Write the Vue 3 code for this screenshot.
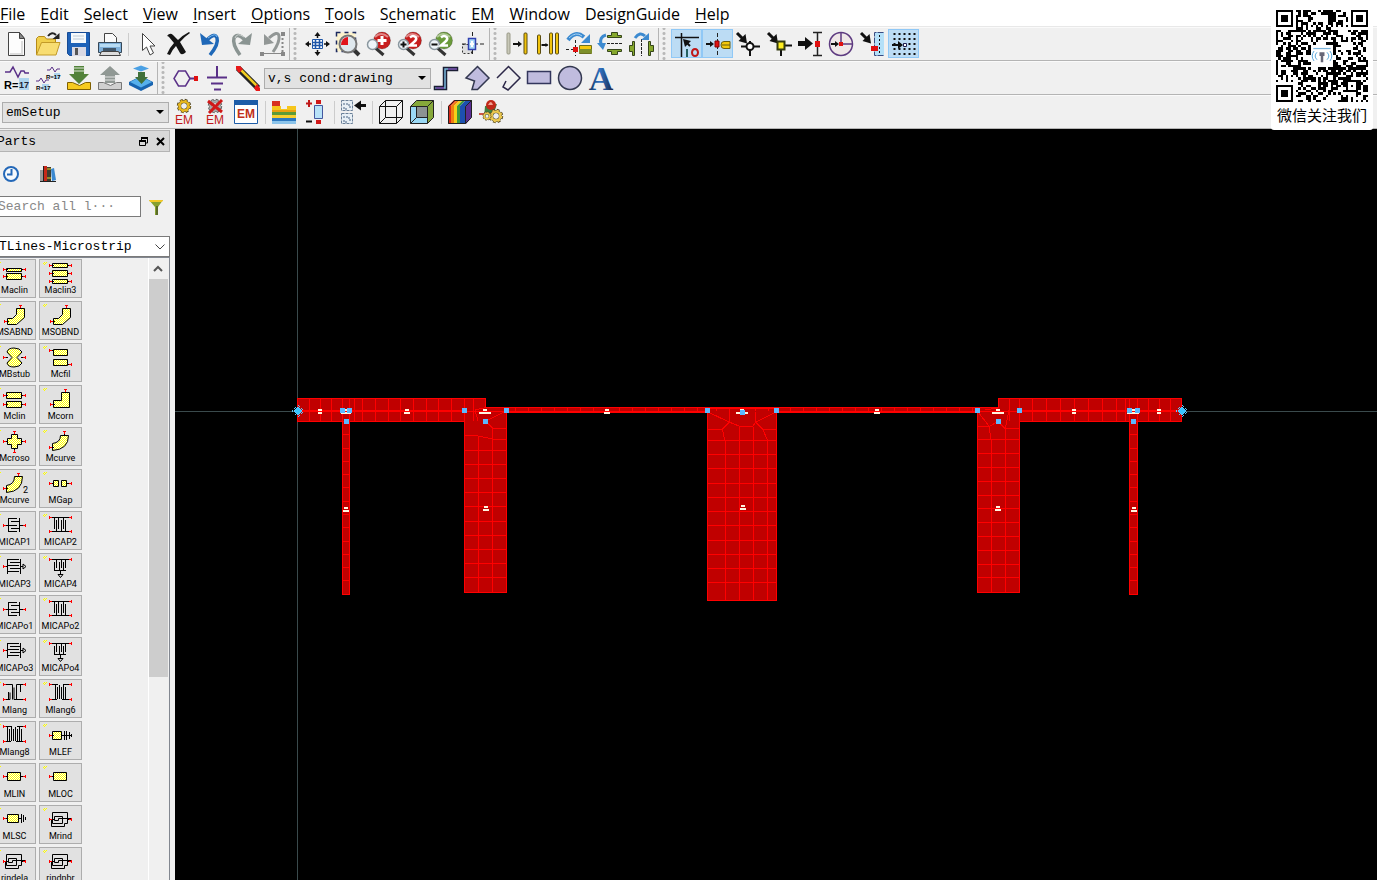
<script setup>
const menus = [
  ['', 'F', 'ile'], ['', 'E', 'dit'], ['', 'S', 'elect'], ['', 'V', 'iew'], ['', 'I', 'nsert'], ['', 'O', 'ptions'],
  ['', 'T', 'ools'], ['S', 'c', 'hematic'], ['', 'EM', ''], ['', 'W', 'indow'], ['DesignGuide', '', ''], ['', 'H', 'elp'],
]

const magnifier = (ball, mark) => `
  <path d="M11.5 19l8 7" stroke="#333" stroke-width="3"/>
  <circle cx="18" cy="11.5" r="8.5" fill="${ball}" stroke="#0003"/><path d="M11 8q6-6 13 0" stroke="#fff7" stroke-width="2" fill="none"/>
  <circle cx="8.500" cy="15.500" r="5" fill="#eef4f8" stroke="#8a979f" stroke-width="1.5"/>${mark}`
const two = '<path d="M15 8.500q3-3 6 0q1 2-2 4.500l-4 3.500h7" fill="none" stroke="#fff" stroke-width="2.500"/>'
const gear = (x, y, c, s = '#4a4020', k = 1) => `<g transform="translate(${x} ${y}) scale(${k})"><circle r="7" fill="none" stroke="${s}" stroke-width="4" stroke-dasharray="3.200 2.300"/><circle r="5.500" fill="none" stroke="${s}" stroke-width="4"/><circle r="5.500" fill="none" stroke="${c}" stroke-width="3"/><circle r="7" fill="none" stroke="${c}" stroke-width="2" stroke-dasharray="2.600 2.900"/><circle r="3" fill="#eee"/></g>`
const bar = (x, y, h, c, s) => `<rect x="${x}" y="${y}" width="3" height="${h}" rx="1" fill="${c}" stroke="${s}"/>`
const arrowR = (x, y, w, k = 3) => `<path d="M${x} ${y}h${w - k}" stroke="#111" stroke-width="2"/><path d="M${x + w - k - 2} ${y - k - 1}l${k + 2} ${k + 1}l${-k - 2} ${k + 1}z" fill="#111"/>`
const arrowD = '<path d="M4 4l7 7" stroke="#111" stroke-width="3"/><path d="M14 14.500L5.500 12l7-7z" fill="#111"/>'
const turn = '<path d="M4 11q7-10 16-3" fill="none" stroke="#3c8ad0" stroke-width="4"/><path d="M26 5v9h-9z" fill="#3c8ad0"/><path d="M5 9q7-7 13-2" fill="none" stroke="#a8d4f4"/>'

const I = {
  doc: '<path d="M7.500 3.500h11l5 6v17h-16z" fill="#fdfdfd" stroke="#444"/><path d="M18.500 3.500v6h5z" fill="#888" stroke="#444"/><path d="M21 12v13h-12" stroke="#ddd" fill="none" stroke-width="2"/>',
  open: '<path d="M4.500 26V9.500l2-2h6l2 2.500h9v6" fill="#f0cf4c" stroke="#b58a18"/><path d="M9.500 13.500h18.500l-4 12.500h-19.500z" fill="#f8dd72" stroke="#c29a28"/><path d="M16 7q4-5 8-1" stroke="#222" stroke-width="2" fill="none"/><path d="M27.500 4v6h-7z" fill="#222"/>',
  save: '<path d="M4.500 3.500h22v23h-20l-2-2z" fill="#1e62b8" stroke="#174b94"/><path d="M8 4h15v10H8z" fill="#f5f9fc"/><path d="M10 7h11M10 10h11" stroke="#bcc9d4"/><path d="M9 18h14v9H9z" fill="#d9d9e4"/><path d="M12 19h3v7h-3z" fill="#555"/>',
  print: '<path d="M10.500 15V4.500h8l4 4V15" fill="#fafafa" stroke="#444"/><path d="M4.500 13.500h23v10h-23z" fill="#7fb0da" stroke="#364858"/><path d="M6 15h20v3H6z" fill="#b8dcf4"/><path d="M9 19h13v3H9z" fill="#41576b"/><path d="M7.500 22.500h17l2 4h-21z" fill="#ddd" stroke="#444"/>',
  cursor: '<path d="M9.500 4.500v17l4-3.500l3.500 8l3.500-2l-3.500-7h5z" fill="#fff" stroke="#444"/>',
  del: '<path d="M3 7q3-4 6-1l5 5q5-5 11-8l1 1q-6 4-10 9l6 10q-4 4-6 1l-4-7q-4 4-6 9l-3-1q3-7 7-11l-5-6q-1-1-2-1z" fill="#151515"/>',
  undo: '<path d="M5 4l2 12l12-1z" fill="#1f68b8"/><path d="M12 11q8-8 10-2q2 6-7 17" fill="none" stroke="#1f68b8" stroke-width="3.500"/><path d="M13 9q8-6 9-1" fill="none" stroke="#7dbcf0"/>',
  redo: '<path d="M26 4l-2 12l-12-1z" fill="#8a9492"/><path d="M19 11q-8-8-11-2q-2 6 6 17" fill="none" stroke="#8a9492" stroke-width="3.500"/><path d="M18 8q-7-5-9 1" fill="none" stroke="#cfd4d2"/>',
  area: '<path d="M7 5v11l10-2z" fill="#929796"/><path d="M12 9q9-8 10-2q1 6-6 16" fill="none" stroke="#929796" stroke-width="3"/><path d="M25.500 5v19" stroke="#888" stroke-width="2" stroke-dasharray="2 2" fill="none"/><path d="M5 24.500h21" stroke="#888"/><path d="M3 23h4v4H3zM24 23h4v4h-4zM24 3h4v4h-4z" fill="#888"/>',
  pan: '<path d="M10.500 10.500h10v9h-10z" fill="#fff" stroke="#1e56a8"/><path d="M13.500 10v10M17.500 10v10M10 13.500h11M10 16.500h11" stroke="#1e56a8" stroke-width="1.500"/><path d="M15.500 3l3 4h-6zM15.500 27l3-4h-6zM3 15l4-3v6zM28 15l-4-3v6z" fill="#111"/><path d="M15.500 5v4M15.500 21v4M5 15h4M22 15h4" stroke="#111" stroke-width="1.500"/>',
  zarea: '<path d="M3.500 3.500h19v19h-19z" fill="#fdf3cc" stroke="#1c2a60" stroke-width="1.500" stroke-dasharray="4 4"/><path d="M20 20l6 6" stroke="#333" stroke-width="4"/><circle cx="15" cy="15" r="8.500" fill="#dfe8ee" stroke="#777" stroke-width="2"/><path d="M15 16h-7a7 8 0 0 1 7-8z" fill="#e0141c"/>',
  zplus: magnifier('#c81e1e', '<path d="M18 7v9M13.500 11.500h9" stroke="#fff" stroke-width="3"/>'),
  zin: magnifier('#c81e1e', two + '<path d="M8.500 12.500v6M5.500 15.500h6" stroke="#111" stroke-width="2"/>'),
  zout: magnifier('#6a9a3a', two + '<path d="M5.500 15.500h6" stroke="#111" stroke-width="2"/>'),
  center: '<path d="M5.500 15.500h9v9h-9z" fill="#ddd" stroke="#333" stroke-dasharray="2 2"/><path d="M15.500 3v24M5 15h22" stroke="#222" stroke-dasharray="4 2"/><path d="M11.500 9.500h7v11h-7z" fill="#a9d8f8" stroke="#3040b0" stroke-width="1.500"/><path d="M15 12v6M13 15h4" stroke="#fff" stroke-width="2"/>',
  al1: bar(5, 4, 21, '#c8c8b8', '#999988') + arrowR(11, 15, 9, 2) + bar(22, 4, 21, '#f2c40c', '#5a4c10'),
  al2: bar(4.5, 6, 19, '#f2c40c', '#5a4c10') + arrowR(8.5, 16, 7, 1) + bar(16.5, 4, 21, '#f2c40c', '#5a4c10') + bar(22.5, 4, 21, '#f2c40c', '#5a4c10'),
  rot: turn + '<path d="M11.500 11v16M2 20.500h12" stroke="#222" stroke-dasharray="3 2"/><path d="M9 18h5v5H9z" fill="#e01010"/><path d="M15.500 16.500h12v8h-12z" fill="#f4c80c" stroke="#6a7020"/><path d="M15 20h13v4H15z" fill="#7d8f2a"/>',
  mirv: '<path d="M12.500 8.500v-2h4v-3h6v3h4v2zM12.500 20.500v2h4v3h6v-3h4v-2z" fill="#86a82c" stroke="#35451a"/><path d="M12 14.500h16" stroke="#222" stroke-dasharray="3 1"/><path d="M11 6q-7 2-5 9" fill="none" stroke="#3c8ad0" stroke-width="3"/><path d="M2 14h9l-3 7z" fill="#3c8ad0"/>',
  mirh: '<path d="M8.500 12.500h-2v4h-3v6h3v4h2zM22.500 12.500h2v4h3v6h-3v4h-2z" fill="#86a82c" stroke="#35451a"/><path d="M15.500 10v17" stroke="#222" stroke-dasharray="3 1"/><path d="M9 9q5-7 10-2" fill="none" stroke="#3c8ad0" stroke-width="3"/><path d="M23 4v7h-8z" fill="#3c8ad0"/>',
  s1: '<path d="M10.500 4v24M4 8.500h24" stroke="#111" stroke-width="1.500"/><path d="M19 17l-4-4" stroke="#111" stroke-width="2"/><path d="M12 10l8 2-6 6z" fill="#111"/><path d="M16 20v8" stroke="#246060" stroke-width="2"/><ellipse cx="24" cy="23.500" rx="3" ry="3.500" fill="none" stroke="#c01818" stroke-width="2"/>',
  s2: arrowR(4, 15, 8, 2) + '<path d="M15.500 4v24" stroke="#222" stroke-dasharray="4 2"/><path d="M13 12h4v6h-4z" fill="#e01010" stroke="#800"/><path d="M28 12.500h-6q-3 0-3 3.500t3 3.500h6z" fill="#f4c80c" stroke="#6a6010"/><path d="M20 16h8" stroke="#6a6010"/>',
  s3: arrowD + '<path d="M17 12v15M8 17.500h19" stroke="#111" stroke-width="2"/><circle cx="17" cy="17.500" r="3.500" fill="#fff" stroke="#111" stroke-width="2"/>',
  s4: arrowD + '<path d="M17 17v10M17 16.500h11" stroke="#111" stroke-width="2"/><path d="M13.500 12.500h7v8h-7z" fill="#ffee20" stroke="#333a10" stroke-width="2"/>',
  s5: '<path d="M3 14.500h8" stroke="#111" stroke-width="5"/><path d="M10 8l8 6.500-8 6.500z" fill="#111"/><path d="M22.500 4v22M18 3.500h9M18 26.500h9" stroke="#222" stroke-width="1.500"/><path d="M20 12h5v6h-5z" fill="#e01010"/>',
  s6: '<circle cx="15" cy="15" r="11.500" fill="#efe8e8" stroke="#5d3a80" stroke-width="1.500"/><path d="M15 3v12h12" stroke="#5d3a80" fill="none" stroke-width="1.500"/>' + arrowR(5, 15, 8, 2) + '<path d="M13 13h4v4h-4z" fill="#e01010"/>',
  s7: '<path d="M18 3h9v24h-9z" fill="#b4e0f8"/><path d="M26.500 3.500h-9v23h9" fill="none" stroke="#3a4a80" stroke-dasharray="6 1"/><path d="M22.500 6v18" stroke="#111" stroke-dasharray="2 2"/>' + arrowD + '<path d="M14 17h7v5h-7z" fill="#e01010"/>',
  s8: [6, 11, 16, 21, 26].map(x => `<path d="M${x + 0.5} 4v24" stroke="#111" stroke-width="2" stroke-dasharray="2 3"/>`).join('') + arrowR(4, 16, 11, 3) + '<path d="M15.500 14.500h3v3h-3z" fill="#fff" stroke="#225"/>',

  r17: '<path d="M4 9h5l3-5 5 10 3-6h3l1 2h4" fill="none" stroke="#5a3088" stroke-width="1.500"/><path d="M18 15h10v12H18z" fill="#aed4ee"/><text x="3" y="26" font-size="11" font-weight="bold">R=</text><text x="18" y="25" font-size="9" font-weight="bold" fill="#223">17</text>',
  r17b: '<path d="M15 7h3l2-3 3 5 2-3h3M4 18h3l2-3 3 5 2-3h3" fill="none" stroke="#5a3088"/><path d="M22 10h6v6h-6zM10 21h7v6h-7z" fill="#aed4ee"/><text x="14" y="16" font-size="6" font-weight="bold">R=17</text><text x="4" y="27" font-size="6" font-weight="bold">R=17</text>',
  push: '<path d="M4.500 19.500h5l7 3 6-3h5v7h-23z" fill="#f6ca20" stroke="#806000"/><path d="M11 3h10v8h5l-10 10L6 11h5z" fill="#52823a"/><path d="M10 5h12M10 8h12" stroke="#dfe8da"/>',
  pop: '<path d="M4.500 19.500h5l7 3 6-3h5v7h-23z" fill="#d0d0d0" stroke="#777"/><path d="M11 20h10v-8h5L16 3 6 12h5z" fill="#909894"/><path d="M10 14h12M10 17h12" stroke="#e4e4e4"/>',
  chip: '<path d="M4 19l12-6 12 6v3l-12 6-12-6z" fill="#1864b0"/><path d="M5 19l11-5.500L27 19l-11 5.500z" fill="#56b0ec"/><path d="M8 5.500l8-3 8 3-8 3z" fill="#4aa0e4"/><path d="M13 9h7v5h3l-6.500 7L10 14h3z" fill="#40703a"/>',
  port: '<path d="M8.500 8h7l4.500 7.500-4.500 7.500h-7L4 15.500z" fill="none" stroke="#5a3088" stroke-width="1.500"/><path d="M20 15.500h5" stroke="#5a3088" stroke-width="2"/><path d="M24 13h4v5h-4z" fill="#e01010"/>',
  gnd: '<path d="M16 3v11M6 14.500h20M10 20.500h12M13 26.500h7" stroke="#5a3088" stroke-width="2"/>',
  pencil: '<path d="M6 5l20 20" stroke="#222" stroke-width="6"/><path d="M8 6l17 17" stroke="#f0cc20" stroke-width="2.500"/><path d="M4 3h4l3 3-4 4-3-4zM22 25l3-4 3 4v3h-4z" fill="#e81818"/>',
  step: '<path d="M3.500 23.500h9v-19h14v3h-11v19h-12z" fill="#7ab8dc" stroke="#1b1e34" stroke-width="1.500"/><path d="M5 25h8M17 6h9" stroke="#6a3490" stroke-width="1.500"/>',
  poly: '<path d="M15.500 3.500L27 15 15.500 26.500H10L12.500 18 4 15z" fill="#c0bcde" stroke="#333850" stroke-width="1.500"/>',
  pline: '<path d="M4 15L15.500 3.500 27 15 15 27l-5-3 3-6" fill="none" stroke="#2c2848" stroke-width="1.500"/>',
  rect: '<path d="M3.500 8.500h23v12h-23z" fill="#c0bcde" stroke="#33365c" stroke-width="1.500"/>',
  circ: '<circle cx="15" cy="15" r="11.500" fill="#c0bcde" stroke="#333850" stroke-width="1.500"/>',
  text: '<defs><linearGradient id="ag"><stop offset="0" stop-color="#16335e"/><stop offset=".45" stop-color="#2f74c4"/><stop offset="1" stop-color="#1c2140"/></linearGradient></defs><text x="15" y="27" font-size="34" text-anchor="middle" font-weight="bold" font-family="Liberation Serif, serif" fill="url(#ag)">A</text>',

  em1: gear(15, 9, '#e8b820', '#4a4020', 0.8) + '<text x="15" y="27" font-size="12" text-anchor="middle" fill="#c01818">EM</text>',
  em2: gear(15, 9, '#aaa', '#555', 0.8) + '<path d="M8 4l14 11M22 3L9 16" stroke="#d01818" stroke-width="3"/><text x="15" y="27" font-size="12" text-anchor="middle" fill="#c01818">EM</text>',
  em3: '<path d="M3.500 3.500h23v23h-23z" fill="#fff" stroke="#1c5ca8"/><path d="M3 3h24v5H3z" fill="#1c5ca8"/><text x="15" y="21" font-size="12" font-weight="bold" text-anchor="middle" fill="#c03018">EM</text>',
  layers: '<path d="M3 4h8v5H3z" fill="#d83020"/><path d="M3 9h9v3h6V9h9v6H3z" fill="#f6c61c"/><path d="M3 13h24v2H3z" fill="#e8a010"/><path d="M3 15h24v3H3z" fill="#5c9a38"/><path d="M3 18h24v3H3z" fill="#f6cf30"/><path d="M3 21h24v3H3z" fill="#2c78c0"/><path d="M3 24h24v3H3z" fill="#8cc4ea"/>',
  comp: '<path d="M6 6.500h6M9 3v7" stroke="#c01818" stroke-width="2"/><path d="M6 24.500h6" stroke="#111" stroke-width="2"/><path d="M16 3h5v4h-5zM16 23h5v4h-5z" fill="#d01818"/><path d="M14.500 8.500h8v13h-8z" fill="#b8e2f8" stroke="#4458a0"/>',
  chips: '<path d="M3.500 3.500h11v10h-11zM3.500 16.500h11v10h-11z" fill="#e8f0f6" stroke="#6a8098" stroke-dasharray="3 1"/><path d="M5 7h6v3h3M5 20h6v3h3M6 10v2h4M6 23v2h4" stroke="#4a6484" fill="none" stroke-dasharray="2 1"/><path d="M28 8.500h-7" stroke="#111" stroke-width="3"/><path d="M16 8.500l7-5v10z" fill="#111"/>',
  cube: '<path d="M3.500 9.500h17v17h-17zM9.500 3.500h17v17h-17zM3.500 9.500l6-6M20.500 9.500l6-6M3.500 26.500l6-6M20.500 26.500l6-6" fill="none" stroke="#111"/>',
  cube2: '<path d="M3.500 9.500l6-6h17v17l-6 6h-17z" fill="#9ad8f4"/><path d="M3.500 9.500l6-6h17v17l-6 6v-17z" fill="#86a83a"/><path d="M9.500 9.500h11v11h-11z" fill="#8c9292"/><path d="M3.500 9.500h17v17h-17zM3.500 9.500l6-6h17v17l-6 6M20.500 9.500l6-6M9.500 10v10.500l-6 6M9.500 20.500h11" fill="none" stroke="#222"/>',
  rain: '<path d="M3 9l6-6h3L6 9v18H3z" fill="#d82818"/><path d="M6 9l6-6h3L9 9v18H6z" fill="#f08010"/><path d="M9 9l6-6h3l-6 6v18H9z" fill="#f4d018"/><path d="M12 9l6-6h3l-6 6v18h-3z" fill="#3c9a3c"/><path d="M15 9l6-6h6l-6 6v18h-6z" fill="#1c50b0"/><path d="M21 9l6-6v17l-6 7z" fill="#5a2e94"/><path d="M3.500 9.500l6-6h17v17l-6 6h-17zM20.500 9.500v17M20.500 9.500l6-6" fill="none" stroke="#222"/>',
  opt: '<path d="M3 17h9" stroke="#c02010" stroke-width="1.500"/><path d="M9 9l12-2-4 12-9 1z" fill="#3f8040"/><circle cx="15" cy="8" r="5" fill="#c02818"/><path d="M12 8q3-6 5 0" fill="#f0a090"/>' + gear(20, 19, '#ecc850', '#4a4020', 0.8) + gear(11, 19, '#ecc850', '#4a4020', 0.5),
}

const row1 = [
  [['doc', 'New'], ['open', 'Open'], ['save', 'Save'], ['print', 'Print'], null, ['cursor', 'Select mode'], ['del', 'Delete'], ['undo', 'Undo'], ['redo', 'Redo'], ['area', 'Undo selection']],
  [['pan', 'View all'], ['zarea', 'Zoom area'], ['zplus', 'Zoom in'], ['zin', 'Zoom in by 2'], ['zout', 'Zoom out by 2'], ['center', 'Center']],
  [['al1', 'Move edge'], ['al2', 'Copy edge'], ['rot', 'Rotate'], ['mirv', 'Mirror about X'], ['mirh', 'Mirror about Y']],
  [['s1', 'Snap origin', 1], ['s2', 'Snap to pin', 1], ['s3', 'Snap vertex'], ['s4', 'Snap midpoint'], ['s5', 'Snap edge'], ['s6', 'Snap center'], ['s7', 'Snap intersection'], ['s8', 'Snap grid', 1]],
]
const row2 = [['r17', 'Variables'], ['r17b', 'All variables'], ['push', 'Push'], ['pop', 'Pop'], ['chip', 'Substrate']]
const row2b = [['port', 'Pin'], ['gnd', 'Ground'], ['pencil', 'Trace']]
const row2c = [['step', 'Path'], ['poly', 'Polygon'], ['pline', 'Polyline'], ['rect', 'Rectangle'], ['circ', 'Circle'], ['text', 'Text']]
const row3 = [['em1', 'EM setup'], ['em2', 'Stop EM'], ['em3', 'EM results'], null, ['layers', 'Substrate editor'], ['comp', 'Components'], null, ['chips', 'Ports'], null, ['cube', 'Wireframe'], ['cube2', '3D view'], null, ['rain', 'Field view'], ['opt', 'Optimize']]

// Part symbols: y = filled bodies, k = lines, t = red terminals (side, x, y)
const rc = (x, y, w, h) => `M${x}.5 ${y}.5h${w}v${h}h-${w}z`
const vs = (xs, a, b) => xs.map((x, i) => `M${x}.5 ${(i % 2 ? b : a)[0]}v${(i % 2 ? b : a)[1]}`).join('')
const lr = (...ys) => ys.flatMap(y => [['l', 10, y], ['r', 33, y]])
const cap1 = { k: 'M15.500 7v14M26.500 7v14M15 7.500h9M18 10.500h9M15 14.500h9M18 17.500h9M15 20.500h9M11 14.500h5M26 14.500h6', t: lr(14) }
const cap2 = { k: 'M10 6.500h23M10 20.500h23' + vs([15, 17, 19, 22, 24, 26], [6, 12], [9, 12]), t: lr(6, 20) }
const cap3 = { k: 'M14.500 6v15M27.500 6v15M14 6.500h12M17 9.500h11M14 12.500h12M17 15.500h11M14 18.500h12M11 13.500h4M28 13.500h2M30 11l3 2.500-3 2.500z', t: [['l', 10, 13]] }
const cap4 = { k: 'M10 6.500h23M15 17.500h12M21.500 17v5M19 21.500h5l-2.500 3z' + vs([15, 17, 20, 22, 24, 26], [9, 9], [6, 9]), t: lr(6) }
const bend = { y: 'M23.500 7.500h8v9l-8 7h-9v-6h5l4-4z', t: [['t', 27, 4], ['l', 11, 20]] }
const spiral = { k: 'M10 14.500h2.500v7h13v-3h3v-11h-15v11h10v-7h-8v4h4v-2h13', t: lr(14) }
const parts = [
  ['Maclin', { y: rc(13, 9, 15, 3) + rc(13, 14, 15, 6), t: lr(10, 17) }],
  ['Maclin3', { y: rc(13, 4, 15, 4) + rc(13, 11, 15, 6) + rc(13, 20, 15, 4), t: lr(6, 14, 22) }],
  ['MSABND', bend], ['MSOBND', bend],
  ['MBstub', { y: 'M14 9q1-4 7-4t8 4l-5 5.500 5 5.500q-2 4-8 4t-7-4l5-5.500z', t: lr(14) }],
  ['Mcfil', { y: rc(14, 6, 14, 6) + rc(14, 16, 14, 6), t: [['l', 10, 7], ['r', 33, 21]] }],
  ['Mclin', { y: rc(13, 7, 15, 6) + rc(13, 16, 15, 6), t: lr(10, 19) }],
  ['Mcorn', { y: 'M22.500 7.500h8v15h-16v-7h8z', t: [['t', 26, 4], ['l', 11, 19]] }],
  ['Mcroso', { y: 'M18.500 7.500h6v4h4v6h-4v4h-6v-4h-4v-6h4z', t: [...lr(14), ['t', 21, 4], ['b', 21, 25]] }],
  ['Mcurve', { y: 'M21.500 8.500h8q0 14-16 15v-7q8-1 8-8z', t: [['t', 25, 4], ['l', 10, 20]] }],
  ['Mcurve', { y: 'M21.500 7.500h8q0 15-16 16v-7q8-1 8-9z', n: 1, t: [['t', 25, 4], ['l', 10, 19]] }],
  ['MGap', { y: rc(14, 11, 5, 6) + rc(22, 11, 5, 6), t: lr(14) }],
  ['MICAP1', cap1], ['MICAP2', cap2], ['MICAP3', cap3], ['MICAP4', cap4],
  ['MICAPo1', cap1], ['MICAPo2', cap2], ['MICAPo3', cap3], ['MICAPo4', cap4],
  ['Mlang', { k: 'M10 5.500h9.500v15M10 20.500h7v-7M23.500 20.500v-15h9M33 20.500h-12v-12M27.500 5v8M15.500 13v7', t: lr(5, 20) }],
  ['Mlang6', { k: 'M10 5.500h9M24 5.500h9M10 20.500h8M23 20.500h10' + vs([16, 18, 20, 22, 24, 26], [6, 14], [8, 12]), t: lr(5, 20) }],
  ['Mlang8', { k: 'M10 5.500h9M24 5.500h9M10 20.500h8M23 20.500h10' + vs([14, 16, 18, 20, 22, 24, 26, 28], [6, 14], [8, 12]), t: lr(5, 20) }],
  ['MLEF', { y: rc(13, 10, 9, 8), k: 'M22 14.500h10M25.500 10v9M27.500 10v9M30.500 11v7M32.500 13v3', t: [['l', 10, 14]] }],
  ['MLIN', { y: rc(14, 9, 13, 8), t: lr(13) }],
  ['MLOC', { y: rc(14, 9, 13, 8), t: [['l', 10, 13]] }],
  ['MLSC', { y: rc(14, 9, 11, 8), k: 'M25 13.500h3M28.500 9v9M30.500 10v7M32.500 12v3', t: [['l', 10, 13]] }],
  ['Mrind', spiral], ['rindela', spiral], ['rindnbr', spiral],
]
const term = ([d, x, y]) => ({
  l: `M${x}.5 ${y - 1}v3M${x} ${y}.5h3`, r: `M${x - 1}.5 ${y - 1}v3M${x - 3} ${y}.5h3`,
  t: `M${x - 1} ${y}.5h3M${x}.5 ${y}v3`, b: `M${x - 1} ${y}.5h3M${x}.5 ${y - 2}v3`,
})[d]
const lead = ([d, x, y]) => ({ l: `M${x + 3} ${y}.5h2`, r: `M${x - 5} ${y}.5h2`, t: `M${x}.5 ${y + 2}v2`, b: `M${x}.5 ${y - 4}v2` })[d]

// Layout mesh
const vl = (xs, a, b) => xs.map(x => `M${x}.5 ${a}V${b}`).join('')
const hl = (ys, a, b) => ys.map(y => `M${a} ${y}.5H${b}`).join('')
const thin = (a, b) => { let s = ''; for (let x = a; x < b; x += 13) s += `M${x}.5 408V411`; return s }
const stubRows = [434, 448, 461, 474, 487, 501, 514, 527, 541, 554, 567, 580]
const mesh = [
  vl([309, 320, 331, 342, 349, 354, 362, 375, 388, 400, 413, 426, 438, 451, 464, 473], 399, 421),
  hl(stubRows, 343, 349), hl(stubRows, 1130, 1137),
  vl([478], 436, 592), vl([492], 428, 592),
  hl([450, 464, 478, 492, 506, 521, 535, 549, 563, 577], 465, 506),
  hl([435], 465, 478), hl([428, 439], 492, 506), 'M478.500 436l14 3M485.500 421l7 7M485.500 421l21-10M475 410l3 11M475 410l13-3',
  thin(515, 706), thin(790, 976), thin(716, 770),
  vl([725, 767], 440, 600), vl([739, 753], 427, 600),
  hl([440, 454, 468, 483, 497, 511, 525, 540, 554, 568, 582], 708, 776),
  'M708 412l21 10 10 4h14l3-4 20-10M729.500 409v13l-7 7 2 11M755.500 412v10l7 7 5 11M708 429.500h15M762 429.500h14',
  vl([991], 440, 592), vl([1005], 428, 592),
  hl([439, 453, 467, 481, 495, 508, 522, 536, 550, 564, 577], 978, 1019),
  'M978 412l11 14 2 14M978 426.500h11l9-5 7 7h14M1009.500 408l-4 20M985 410l13-2',
  vl([1009, 1019, 1032, 1046, 1060, 1074, 1088, 1102, 1116, 1125, 1129, 1137, 1148, 1159, 1170], 399, 421),
].join('')
const pins = [[342, 410], [349, 410], [346, 421], [464, 410], [506, 410], [485, 421], [707, 410], [776, 410], [742, 412], [977, 410], [1019, 410], [998, 421], [1129, 410], [1137, 410], [1133, 421]]
const tags = [[320, 411, 4], [346, 411, 10], [407, 411, 6], [485, 411, 12], [607, 411, 6], [742, 411, 12], [877, 411, 6], [998, 411, 12], [1074, 411, 4], [1133, 411, 12], [1159, 411, 4], [346, 509, 6], [486, 508, 6], [743, 507, 6], [998, 508, 6], [1134, 509, 6]]

// Code symbol modules on a 37-cell grid
const N = 37
let seed = 20177
const rnd = () => (seed = (seed * 1103515245 + 12345) % 2147483648) / 2147483648
const ring = (x, y, cx, cy, r) => {
  const d = Math.max(Math.abs(x - cx), Math.abs(y - cy))
  return d > r ? null : r === 4 ? d !== 4 && d !== 2 : d !== 1
}
let qr = ''
for (let y = 0; y < N; y++) for (let x = 0; x < N; x++) {
  let on = rnd() < 0.5
  if (y === 6 || x === 6) on = (x + y) % 2 === 0
  for (const [cx, cy, r] of [[3, 3, 4], [33, 3, 4], [3, 33, 4], [30, 30, 2]]) {
    const v = ring(x, y, cx, cy, r)
    if (v !== null) on = v
  }
  if (on) qr += `M${x} ${y}h1v1h-1z`
}
</script>

<template>
  <div class="app">
    <nav class="menu">
      <a v-for="m in menus" :key="m.join('')" href="#">{{ m[0] }}<u>{{ m[1] }}</u>{{ m[2] }}</a>
    </nav>

    <div class="bar wide">
      <template v-for="(g, i) in row1" :key="i">
        <span v-if="i" class="grip"></span>
        <template v-for="(b, j) in g" :key="j">
          <button v-if="b" class="tool" :class="{ on: b[2] }" :aria-label="b[1]"><svg viewBox="0 0 31 29" v-html="I[b[0]]"></svg></button>
          <i v-else class="sep"></i>
        </template>
      </template>
    </div>
    <div class="bar">
      <button v-for="b in row2" :key="b[0]" class="tool" :aria-label="b[1]"><svg viewBox="0 0 31 29" v-html="I[b[0]]"></svg></button>
      <span class="grip"></span>
      <button v-for="b in row2b" :key="b[0]" class="tool" :aria-label="b[1]"><svg viewBox="0 0 31 29" v-html="I[b[0]]"></svg></button>
      <span class="combo"><select aria-label="Layer"><option>v,s cond:drawing</option></select></span>
      <button v-for="b in row2c" :key="b[0]" class="tool" :aria-label="b[1]"><svg viewBox="0 0 31 29" v-html="I[b[0]]"></svg></button>
    </div>
    <div class="bar">
      <span class="combo"><select aria-label="EM setup"><option>emSetup</option></select></span>
      <template v-for="(b, j) in row3" :key="j">
        <button v-if="b" class="tool" :aria-label="b[1]"><svg viewBox="0 0 31 29" v-html="I[b[0]]"></svg></button>
        <i v-else class="sep"></i>
      </template>
    </div>

    <div class="work">
      <aside class="panel">
        <header class="title">
          <h2>Parts</h2>
          <button aria-label="Float"><svg width="9" height="9"><path d="M2.500 3V1h6v5h-2M.500 3.500h6v5h-6z" fill="none" stroke="#000" /><path d="M0 4h7M2 1h7" stroke="#000" stroke-width="2" /></svg></button>
          <button aria-label="Close"><svg width="9" height="9"><path d="M1 1l7 7M8 1L1 8" stroke="#000" stroke-width="2" /></svg></button>
        </header>
        <div class="modes">
          <button aria-label="Recent"><svg width="18" height="18"><circle cx="9" cy="9" r="7" fill="#f6f9fc" stroke="#2468b8" stroke-width="2" /><path d="M9.500 4v5.500H5" fill="none" stroke="#2468b8" stroke-width="2" /></svg></button>
          <button aria-label="Libraries"><svg width="18" height="18"><path d="M1 5h3v11H1z" fill="#999" /><path d="M5 1h3v15H5z" fill="#c82818" /><path d="M8 2h4v14H8z" fill="#3c3c30" /><path d="M8 4h4M8 13h4" stroke="#e8d020" /><path d="M12 4l3-1 2 12-4 1z" fill="#3a88d0" /><path d="M4.500 1v15M1 16.500h16" stroke="#222" /></svg></button>
        </div>
        <div class="find">
          <input type="text" placeholder="Search all l···" aria-label="Search parts" />
          <button aria-label="Filter"><svg width="16" height="18"><path d="M1 2h14l-5 7v8H7V9z" fill="#86a030" /><path d="M1 2h14l-1 2H2z" fill="#f2c828" /><path d="M9 8v9" stroke="#5a6c28" stroke-width="2" /></svg></button>
        </div>
        <span class="library">
          <select aria-label="Library"><option>TLines-Microstrip</option></select>
          <svg width="10" height="6"><path d="M.500 .500L5 5l4.500-4.500" fill="none" stroke="#444" /></svg>
        </span>
        <div class="list">
          <div class="grid">
            <button v-for="(p, i) in parts" :key="i" class="part">
              <svg viewBox="1 1 41 25">
                <defs><pattern :id="'dots' + i" width="2" height="2" patternUnits="userSpaceOnUse"><path d="M0 0h2v2H0z" fill="#fffff0" /><path d="M0 0h1v1H0zM1 1h1v1H1z" fill="#ff0" /></pattern></defs>
                <path d="M5 3h1v1H5zM7 3h1v1H7zM4 4h1v1H4zM6 4h1v1H6zM5 5h1v1H5z" fill="#ff0" />
                <path v-if="p[1].y" :d="p[1].y" :fill="`url(#dots${i})`" stroke="#000" />
                <path v-if="p[1].k" :d="p[1].k" fill="none" stroke="#000" />
                <path :d="p[1].t.map(lead).join('')" stroke="#000" />
                <path :d="p[1].t.map(term).join('')" stroke="#f00" />
                <text v-if="p[1].n" x="30" y="24" font-size="9">2</text>
              </svg>
              <span>{{ p[0] }}</span>
            </button>
          </div>
          <div class="scroll">
            <svg width="18" height="21"><path d="M5 13l4-4 4 4" fill="none" stroke="#555" stroke-width="2" /></svg>
            <i></i>
          </div>
        </div>
      </aside>

      <main class="canvas">
        <svg width="100%" height="100%" shape-rendering="crispEdges">
          <g transform="translate(-175 -129)">
            <path d="M297.500 0V5000M0 411.500H5000" stroke="#3a4a4c" />
            <g fill="#c00000" stroke="#f00">
              <path d="M297.500 398.500h188v9h492h21v-9h183v23h-162v171h-42v-180h-201v188h-69v-188h-201v180h-42v-171h-167z" />
              <path d="M342.500 421.500h7v173h-7zM1129.500 421.500h8v173h-8z" />
              <path :d="mesh" fill="none" />
              <path d="M298 411H464M506 412H708M776 412H978M1019 411H1181" stroke-width="2" />
              <path d="M464 411.500H506M708 408.500H776M978 411.500H1019M464.500 410V421" />
            </g>
            <g v-for="(t, i) in tags" :key="i" fill="#fff4e0">
              <rect :x="t[0] - 2" :y="t[1] - 2" width="4" height="2" />
              <rect :x="t[0] - t[2] / 2" :y="t[1] + 1" :width="t[2]" height="2" />
            </g>
            <rect v-for="(p, i) in pins" :key="i" :x="p[0] - 2" :y="p[1] - 2" width="5" height="5" fill="#5cb8ff" />
            <g v-for="x in [298, 1182]" :key="x" fill="#38c4ff" stroke="#5cc8ff">
              <path :d="`M${x} 405l6 6-6 6-6-6z`" fill="none" stroke-dasharray="1 1" />
              <path :d="`M${x} 407l4 4-4 4-4-4z`" />
            </g>
          </g>
        </svg>
      </main>
    </div>

    <figure class="code">
      <svg viewBox="0 0 37 37" shape-rendering="crispEdges">
        <path :d="qr" />
        <rect x="14" y="14" width="9" height="9" rx="1" fill="#fff" />
        <g shape-rendering="auto">
          <path d="M15 15.500h7" stroke="#7ab4dc" stroke-width=".5" />
          <path d="M17.500 17h2v1.500h-2zM18 18.500h1v2.500h-1z" fill="#667" />
          <path d="M16.500 17q-1.500 1.500 0 3M15.300 16.500q-1.500 2 0 4M20.500 17q1.500 1.500 0 3M21.700 16.500q1.500 2 0 4" fill="none" stroke="#5aa8dc" stroke-width=".4" />
        </g>
      </svg>
      <figcaption>微信关注我们</figcaption>
    </figure>
  </div>
</template>

<style>
body { margin: 0; overflow: hidden; }
</style>

<style scoped>
.app {
  position: relative;
  display: flex;
  flex-direction: column;
  height: 100vh;
  overflow: hidden;
  background: #f0f0f0;
  color: #000;
  font-family: "Liberation Mono", monospace;
  font-size: 13px;
}
button {
  padding: 0;
  border: 0;
  background: none;
  font: inherit;
  color: inherit;
}
svg { display: block; flex: none; }
select, input {
  font: inherit;
  color: inherit;
  appearance: none;
  border: 0;
  border-radius: 0;
  outline: 0;
  background: none;
}
.menu {
  display: flex;
  flex: none;
  gap: 15px;
  height: 26px;
  background: #fff;
  border-bottom: 1px solid #e8e8e8;
  font: 16px/29px "Open Sans", "Noto Sans", sans-serif;
  white-space: nowrap;
}
.menu a { color: #000; text-decoration: none; }
.menu u { text-underline-offset: 2px; }
.bar {
  display: flex;
  flex: none;
  align-items: center;
  height: 32px;
  padding: 0 1px;
  border-top: 1px solid #fafafa;
  border-bottom: 1px solid #b4b4b4;
  font-family: "Liberation Sans", sans-serif;
}
.tool { flex: none; align-self: flex-start; width: 31px; height: 29px; margin-top: 1px; }
.tool.on { background: #bcdcf4; box-shadow: inset 0 0 0 1px #90c8f6; }
.tool svg { width: 31px; height: 29px; }
.sep {
  flex: none;
  width: 1px;
  height: 23px;
  margin: 0 3px;
  background: #ccc;
}
.wide .sep { margin-right: 4px; }
.grip {
  flex: none;
  align-self: stretch;
  width: 12px;
  margin-left: 1px;
  border-left: 1px solid #b4b4b4;
  background: radial-gradient(circle, #b8b8b8 1px, transparent 2px) 3px 3px / 4px 5px repeat-y;
}
.combo {
  position: relative;
  flex: none;
  display: flex;
  width: 167px;
  margin: 0 0 0 1px;
  font-family: "Liberation Mono", monospace;
}
.combo select {
  width: 100%;
  height: 21px;
  padding: 0 3px;
  background: #e2e2e2;
  border: 1px solid #adadad;
}
.combo::after {
  content: "";
  position: absolute;
  right: 5px;
  top: 8px;
  border: 4px solid transparent;
  border-top-color: #000;
  border-bottom: 0;
}
.work { display: flex; flex: 1; min-height: 0; }
.panel {
  display: flex;
  flex-direction: column;
  flex: none;
  width: 170px;
  margin-right: 5px;
  overflow: hidden;
}
.title {
  display: flex;
  align-items: center;
  gap: 8px;
  height: 20px;
  margin: 1px 0 0 -4px;
  padding-right: 4px;
  background: #d9d9d9;
  border: 1px solid #b4b4b4;
}
.title h2 { flex: 1; margin: 0; font: inherit; }
.modes { display: flex; gap: 19px; padding: 13px 2px; }
.find {
  display: flex;
  align-items: center;
  gap: 7px;
  margin: 0 0 19px -5px;
}
.find input {
  box-sizing: border-box;
  width: 146px;
  height: 21px;
  padding: 0 0 0 2px;
  border: 1px solid #7a7a7a;
  background: #fff;
}
.find input::placeholder { color: #888; opacity: 1; }
.library { position: relative; display: flex; margin-left: -5px; }
.library select {
  width: 100%;
  height: 21px;
  padding: 0 3px;
  border: 1px solid #7a7a7a;
  background: #fff;
}
.library svg { position: absolute; right: 5px; top: 8px; }
.list {
  display: flex;
  flex: 1;
  justify-content: space-between;
  min-height: 0;
  border-top: 1px solid #828790;
  border-right: 1px solid #828790;
}
.grid {
  display: grid;
  grid-template-columns: 43px 43px;
  grid-auto-rows: 39px;
  gap: 3px;
  margin: 1px 0 0 -7px;
}
.part {
  display: flex;
  flex-direction: column;
  align-items: center;
  background: #e1e1e1;
  border: 1px solid #adadad;
  font: 9px/10px Roboto, sans-serif;
}
.part svg { width: 41px; height: 25px; }
.scroll {
  width: 19px;
  margin-right: 1px;
  border-left: 1px solid #fff;
}
.scroll i { display: block; height: 398px; background: #cdcdcd; }
.canvas { flex: 1; min-width: 0; background: #000; }
.code {
  position: absolute;
  top: 0;
  right: 4px;
  box-sizing: border-box;
  width: 102px;
  margin: 0;
  padding: 10px 5px 2px;
  border-radius: 3px;
  background: #fff;
}
.code svg { width: 92px; height: 92px; }
.code figcaption {
  font: 15px/26px "Noto Sans CJK SC", sans-serif;
  text-align: center;
  white-space: nowrap;
}
</style>
